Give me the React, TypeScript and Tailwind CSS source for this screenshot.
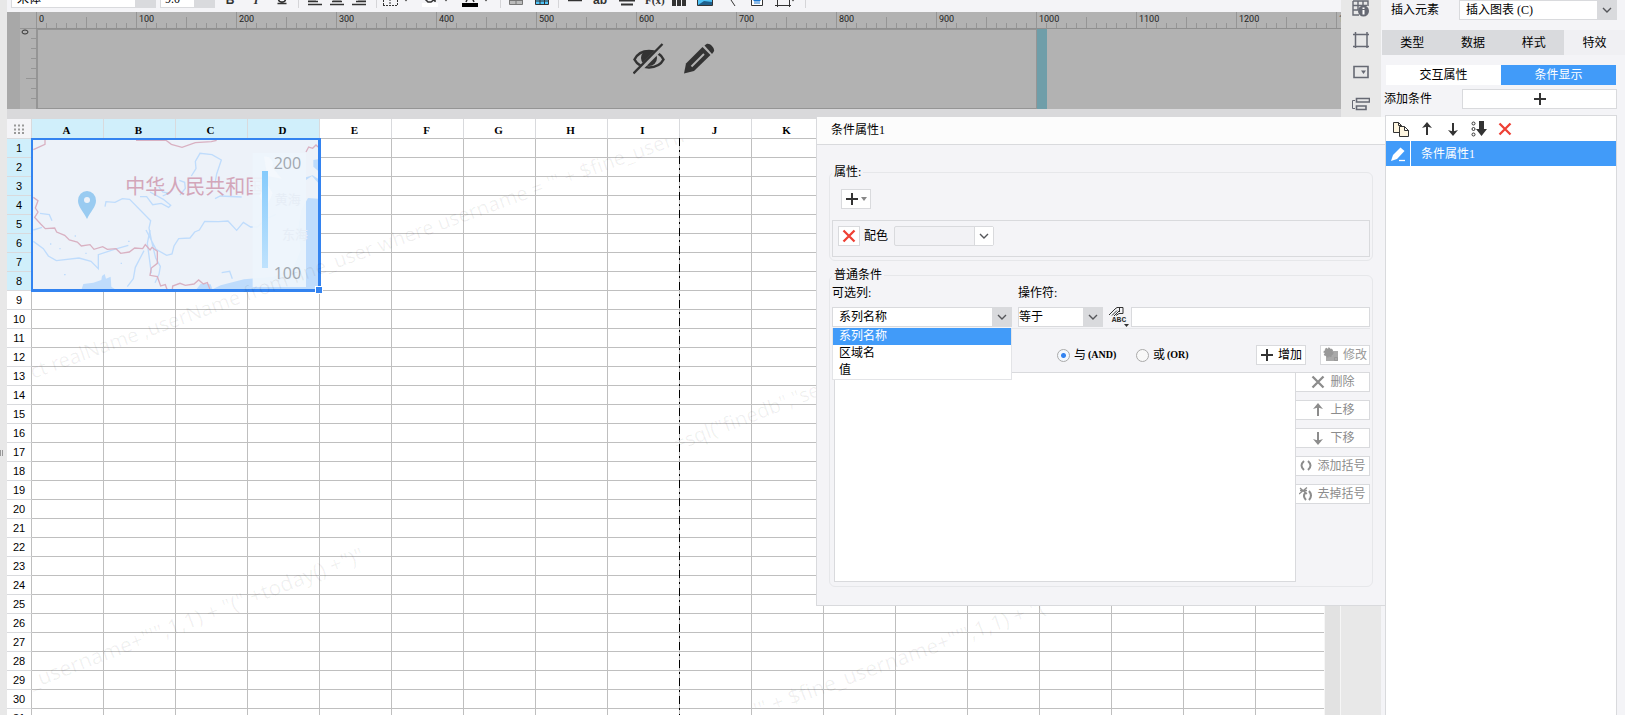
import React from 'react';

const COLUMNS = 'ABCDEFGHIJKLMNOPQR'.split('');
const ROWS = Array.from({ length: 32 }, (_, i) => i + 1);
const RULER = Array.from({ length: 14 }, (_, i) => i * 100);
const FONT = "font-['Liberation_Serif','Noto_Sans_CJK_SC',sans-serif]";

interface IconProps {
  children: React.ReactNode;
  className?: string;
  viewBox?: string;
}

// Base for the small line icons
const Icon: React.FC<IconProps> = ({ children, className = 'w-4 h-4', viewBox = '0 0 16 16' }) => (
  <svg viewBox={viewBox} className={`${className} shrink-0`} fill="none" stroke="currentColor" aria-hidden="true">
    {children}
  </svg>
);

const ChevronIcon = () => (
  <Icon className="w-[10px] h-[10px] text-[#55565a]" viewBox="0 0 10 10">
    <path d="M1 3l4 4 4-4" strokeWidth="1.4" />
  </Icon>
);

const CaretIcon = () => (
  <Icon className="w-1 h-4 text-[#444]" viewBox="0 0 4 16">
    <path d="M0 7h4L2 9.5z" fill="currentColor" stroke="none" />
  </Icon>
);

const PlusIcon = () => (
  <Icon className="w-[14px] h-[14px] text-[#333]" viewBox="0 0 14 14">
    <path d="M7 1v12M1 7h12" strokeWidth="2" />
  </Icon>
);

const CrossIcon = () => (
  <Icon className="w-4 h-4">
    <path d="M2.5 2.5l11 11M13.5 2.5l-11 11" strokeWidth="2.3" />
  </Icon>
);

const UpIcon = () => (
  <Icon>
    <path d="M8 14V5" strokeWidth="2" />
    <path d="M8 1l5 6-5-1.500L3 7z" fill="currentColor" stroke="none" />
  </Icon>
);

const DownIcon = () => (
  <Icon>
    <path d="M8 2v9" strokeWidth="2" />
    <path d="M8 15L3 9l5 1.500L13 9z" fill="currentColor" stroke="none" />
  </Icon>
);

interface SelectBoxProps {
  id: string;
  options: string[];
  className: string;
  textClass?: string;
}

const SelectBox: React.FC<SelectBoxProps> = ({ id, options, className, textClass = 'pl-[6px]' }) => (
  <div className={`relative flex h-5 bg-white border border-[#d9dadd] ${className}`}>
    <select id={id} className={`appearance-none w-full h-full pr-5 leading-4 outline-none ${textClass}`}>
      {options.map((o) => (
        <option key={o}>{o}</option>
      ))}
    </select>
    <span className="absolute inset-y-0 right-0 w-[19px] bg-[#d9dadd] flex items-center justify-center pointer-events-none">
      <ChevronIcon />
    </span>
  </div>
);

const Separator = ({ className }: { className: string }) => <span className={`w-px h-4 bg-[#d5d5d8] shrink-0 ${className}`} />;

const ToolButton = ({ label, children, className = 'w-4' }: { label: string; children: React.ReactNode; className?: string }) => (
  <button aria-label={label} className={`h-4 flex shrink-0 justify-between leading-4 text-[#333] ${className}`}>
    {children}
  </button>
);

const Toolbar = () => (
  <div className="h-3 shrink-0 bg-[#f4f4f7] flex items-end pb-1 pl-1 overflow-hidden">
    <div className="w-[145px] h-5 shrink-0 bg-white border border-[#d9dadd] flex items-end justify-between">
      <span className="pl-[5px] leading-4">宋体</span>
      <span className="w-5 h-full bg-[#d9dadd] flex justify-center items-center"><CaretIcon /></span>
    </div>
    <div className="w-[55px] h-5 ml-1 shrink-0 bg-white border border-[#d9dadd] flex items-end justify-between">
      <span className="pl-1 leading-4">9.0</span>
      <span className="w-5 h-full bg-[#d9dadd] flex justify-center items-center"><CaretIcon /></span>
    </div>
    <div className="flex gap-[10px] ml-[7px]">
      <ToolButton label="加粗"><b className="w-4 text-center font-['Liberation_Sans'] text-xs leading-4">B</b></ToolButton>
      <ToolButton label="斜体"><i className="w-4 text-center text-xs leading-4 font-bold">I</i></ToolButton>
      <ToolButton label="下划线">
        <Icon><path d="M4.500 1v6a3.500 3 0 0 0 7 0V1M3.500 11.500h9" strokeWidth="1.500" /></Icon>
      </ToolButton>
    </div>
    <Separator className="mx-2" />
    <div className="flex gap-[6px]">
      <ToolButton label="左对齐"><Icon><path d="M1 4.500h14M1 7.500h8M1 9.500h10M1 12.500h14" strokeWidth="1.500" /></Icon></ToolButton>
      <ToolButton label="居中"><Icon><path d="M1 4.500h14M4 7.500h8M3 9.500h10M1 12.500h14" strokeWidth="1.500" /></Icon></ToolButton>
      <ToolButton label="右对齐"><Icon><path d="M1 4.500h14M7 7.500h8M5 9.500h10M1 12.500h14" strokeWidth="1.500" /></Icon></ToolButton>
    </div>
    <Separator className="ml-[9px] mr-[5px]" />
    <div className="flex gap-[14px]">
      <ToolButton label="边框" className="w-[26px]">
        <Icon><path d="M1.500 13V1h14v12M8 1v12M1 7h14M1 13.500h15" strokeDasharray="2 1" /></Icon>
        <CaretIcon />
      </ToolButton>
      <ToolButton label="填充" className="w-[26px]">
        <Icon><path d="M3 7l5-5 5 5-4 3H6zM13 6v4" strokeWidth="1.500" /><path d="M0 11h16v4H0z" fill="#fff" stroke="none" /></Icon>
        <CaretIcon />
      </ToolButton>
      <ToolButton label="字体颜色" className="w-[26px]">
        <Icon><path d="M4 10l4-9 4 9M5 7h6" strokeWidth="1.500" /><path d="M0 11h16v4H0z" fill="#000" stroke="none" /></Icon>
        <CaretIcon />
      </ToolButton>
    </div>
    <Separator className="ml-3 mr-[7px]" />
    <div className="flex gap-[10px]">
      <ToolButton label="合并">
        <Icon><path d="M1.500 1.500h13v11h-13zM1 8.500h14M8 8v5" stroke="#777" fill="#bbb" /></Icon>
      </ToolButton>
      <ToolButton label="拆分">
        <Icon><path d="M1.500 1.500h13v11h-13zM1 5h14M1 9h14M6 1v11M10.500 1v11" fill="#4fc3f7" /></Icon>
      </ToolButton>
    </div>
    <Separator className="mx-2" />
    <div className="flex gap-[10px]">
      <ToolButton label="线"><Icon><path d="M1 8.500h14" strokeWidth="1.500" /></Icon></ToolButton>
      <ToolButton label="文本"><b className="font-['Liberation_Sans'] text-xs leading-4">ab</b></ToolButton>
      <ToolButton label="段落"><Icon><path d="M0 8.500h16M2 12.500h12" strokeWidth="2" /></Icon></ToolButton>
      <ToolButton label="公式"><b className="text-[11px] leading-4">F(x)</b></ToolButton>
      <ToolButton label="图表"><Icon><path d="M3 5v9M8 3v11M13 7v7" strokeWidth="4" /></Icon></ToolButton>
      <ToolButton label="图片"><Icon><path d="M.5 1.500h15v12H.5z" fill="#4fc3f7" /><path d="M1 13l6-4 8 1v3z" fill="#1f5f8b" stroke="none" /></Icon></ToolButton>
      <ToolButton label="斜线"><Icon><path d="M4 2l8 12" /></Icon></ToolButton>
      <ToolButton label="子报表"><Icon><path d="M2.500 1.500h11v12h-11z" fill="#fff" /><path d="M5 7h6v2H5zM5 11h6" fill="#1976d2" stroke="#1976d2" /></Icon></ToolButton>
      <ToolButton label="悬浮元素" className="w-5"><Icon><path d="M2.500 0v15M14.500 0v15M0 13.500h16" /></Icon><CaretIcon /></ToolButton>
    </div>
    <Separator className="ml-[10px]" />
  </div>
);

const RulerPanel = () => (
  <div className="h-[97px] shrink-0 bg-[#b2b2b2] flex overflow-hidden">
    <div className="w-[13px] shrink-0 bg-[#a8a8a8]" />
    <div className="w-4 shrink-0 pt-4">
      <svg viewBox="0 0 16 80" className="w-4 h-20" stroke="#959595" aria-hidden="true">
        <path d="M0 .5h16M11 10.500h5M11 20.500h5M11 30.500h5M11 40.500h5M6 50.500h10M11 60.500h5M11 70.500h5" />
        <ellipse cx="5" cy="4" rx="3" ry="2" fill="none" stroke="#333" />
      </svg>
    </div>
    <div className="flex-1 min-w-0">
      <div className="h-4 flex">
        {RULER.map((n) => (
          <div key={n} className="w-[100px] h-4 shrink-0 relative border-l border-[#959595]">
            <span className="block pl-[2px] pt-px leading-3 text-[9px] text-[#222] font-['Roboto']">{n}</span>
            <svg viewBox="0 0 99 16" className="absolute inset-0 w-full h-full" stroke="#959595" aria-hidden="true">
              <path d="M9.500 11v5M19.500 11v5M29.500 11v5M39.500 11v5M49.500 5v11M59.500 11v5M69.500 11v5M79.500 11v5M89.500 11v5" />
            </svg>
          </div>
        ))}
      </div>
      <div className="h-[81px] border-t border-[#8f8f8f] flex">
        <div className="w-[1001px] shrink-0 border-l-2 border-t border-b border-r border-[#959595] flex justify-center items-start gap-[18px] pt-[13px] pl-[273px] text-[#333]">
          <Icon className="w-8 h-8" viewBox="0 0 32 32">
            <path d="M1.500 16.500C7 5 25 5 30.500 16.500 25 27 7 27 1.500 16.500z" strokeWidth="2.500" />
            <circle cx="16" cy="15" r="8" fill="currentColor" stroke="none" />
            <path d="M2 31L32 1" stroke="#b2b2b2" strokeWidth="5" />
            <path d="M.5 30.500L29.500 1" strokeWidth="2.300" />
          </Icon>
          <Icon className="w-8 h-8" viewBox="0 0 32 32">
            <path d="M1 30.500l2-10L19.500 4l8 8L11 28z" fill="currentColor" stroke="none" />
            <path d="M8.500 23.500L21 11" stroke="#b2b2b2" strokeWidth="2" />
            <path d="M21.500 2.500l2-1.500c3-2 9.500 4.500 7 8l-1.500 2z" fill="currentColor" stroke="none" />
          </Icon>
        </div>
        <div className="w-[10px] shrink-0 bg-[#6f9ea9]" />
      </div>
    </div>
  </div>
);

const MapChart = () => (
  <svg viewBox="99 420 855 447" className="w-full h-full bg-[#edf2f9]" fill="none" aria-hidden="true">
    <g fill="#bfdcfc">
      <path d="M954 596l-30-2-20 36-10 60 8 60-20 50-60 30-90 8-70 18-25 12h320z" />
      <path d="M245 867l5-15 30-4 24-8 2-12 8-6 4 14 14-6 2 30 10 7zM590 867l12-16 30 2 5 14zM940 480l14-2v34l-14-12zM918 540l18-12 18 20v-12l-16-10-20 6z" />
      <path d="M178 744h4v4h-4zM224 706h4v4h-4zM150 730h4v4h-4zM192 822h5v4h-5zM256 758h4v4h-4zM384 722h5v4h-5zM362 788h4v4h-4z" />
    </g>
    <g stroke="#bfdcfc" strokeWidth="4">
      <path d="M315 620l3-15 27 2 22-11 22 2 63 64-5 22 8 40 12 50 14 25-4 24-12 25M438 690l30 58 32 18 16-4 6-24 14-22 34-2 14-18 14-6 16-26 42 1 28-2 26 28 20-24 22 14h20l26-24 30-14" />
      <path d="M574 528l14-22-2-22 14-24 36 4 28 16-14 42-5 28M540 585l16-20-2-18-16-6M476 560l12 16 18 4-18 8M420 590h20l18 24 26-4 22 12 6-6-22-18-40-22M645 596l16-8 64 3M665 818l24-4 8 22" />
      <path d="M100 724l30 22 15 22 24 14 68-8 36 10 22 22v-42l48-16 42-12M432 752l-26 50-6 34-18 24M450 690l-8 40 12 90M120 640l28 4 8 18M100 690l26-8" />
    </g>
    <g stroke="#d9b1c2" strokeWidth="4">
      <path d="M100 449l35-16v-13M408 421h90l16 12 32 9 40-14 48-3 16-4M918 456l8-15 12 4 10-10 6 6" />
      <path d="M100 592l14 10-8 22 8 12-10 16 18 20 14 14 28-2 6 12 24 10 14 14 24 6 12 12 26-4 12 14 26-8 14 8 26-2 14 14 26-4 16-12 24 2 8-12 14 16 6-8 16 12v36l-18 14-4 22 22 4 10 28 14-4 10 28 10-2 2-22 22-8 16 6 26-4 14-12 14 12 12-4 8 20 16 8" />
    </g>
    <text x="376" y="582" fontSize="60" fill="#d3a6b9" fontFamily="Noto Sans CJK SC">中华人民共和国</text>
    <path d="M234 602a27 29 0 0 1 54 0c0 18-16 32-27 55-11-23-27-37-27-55z" fill="#99cbf1" />
    <circle cx="261" cy="600" r="9" fill="#edf2f9" />
    <rect x="758" y="459" width="160" height="402" fill="#eef5fc" fillOpacity=".93" />
    <path d="M792 470a22 22 0 0 1 24 32l30 34-44-8zM800 550l18 30-20 44-20-36z" fill="#f4f8fd" />
    <text x="824" y="612" fontSize="39" fill="#e6edf6" fontFamily="Noto Sans CJK SC">黄海</text>
    <text x="846" y="717" fontSize="39" fill="#e6edf6" fontFamily="Noto Sans CJK SC">东海</text>
    <defs>
      <linearGradient id="scale" x1="0" y1="0" x2="0" y2="1">
        <stop offset="0" stopColor="#86cbfc" />
        <stop offset="1" stopColor="#bfe2fd" />
      </linearGradient>
    </defs>
    <rect x="786" y="513" width="18" height="291" fill="url(#scale)" />
    <g fill="#a0a7af" fontFamily="Open Sans" fontSize="48">
      <text x="821" y="508">200</text>
      <text x="821" y="838">100</text>
    </g>
  </svg>
);

const Watermark = () => (
  <svg className="absolute left-[25px] top-5 w-[1300px] h-[600px] pointer-events-none" fill="#000" fillOpacity=".06" fontFamily="Noto Sans" fontSize="20" aria-hidden="true">
    <text transform="translate(1 240) rotate(-20)">ct realName ,userName from fine_user where username = '" + $fine_usern</text>
    <text transform="translate(0 550) rotate(-21)" fontSize="21">_username+"'",1,1) + "(" +today() +")"</text>
    <text transform="translate(645 312) rotate(-21)">=sql("finedb","se</text>
    <text transform="translate(725 579) rotate(-20)" fontSize="21">'" + $fine_username+"'",1,1) + "(" +to</text>
  </svg>
);

const Sheet = () => (
  <div className="flex-1 min-h-0 flex">
    <div className="relative flex-1 min-w-0 overflow-hidden bg-white">
      <table className="table-fixed w-max border-separate border-spacing-0 text-black">
        <thead>
          <tr className="h-5">
            <th className="w-[25px] h-5 p-0 bg-[#f4f4f7] border-r border-b border-[#d9dadd]">
              <Icon className="w-[11px] h-[10px] mx-auto text-[#999]" viewBox="0 0 11 10">
                <path d="M0 1.500h11M0 5.500h11M0 9h11" strokeWidth="2" strokeDasharray="2 2" />
              </Icon>
            </th>
            {COLUMNS.map((c, i) => (
              <th
                key={c}
                className={`w-[72px] h-5 p-0 pt-[2px] pr-[2px] leading-4 text-[11px] font-bold border-r border-b border-r-[#d9dadd] border-b-[#bfbfbf] ${i < 4 ? 'bg-[#d0effb]' : 'bg-white'}`}
              >
                {c}
              </th>
            ))}
          </tr>
        </thead>
        <tbody>
          {ROWS.map((r) => (
            <tr key={r}>
              <th className={`w-[25px] h-[19px] p-0 leading-4 text-[11px] font-['Liberation_Sans'] font-normal border-r border-b border-r-[#bfbfbf] border-b-[#d9dadd] ${r < 9 ? 'bg-[#d0effb]' : 'bg-white'}`}>
                {r}
              </th>
              {COLUMNS.map((c) => (
                <td key={c} className="w-[72px] h-[19px] p-0 border-r border-b border-[#bfbfbf]" />
              ))}
            </tr>
          ))}
        </tbody>
      </table>
      {/* Page break */}
      <svg viewBox="0 0 1 600" className="absolute left-[672px] top-[19px] w-px h-[600px]" stroke="#000" strokeWidth="2" aria-hidden="true">
        <path d="M.5 0v600" strokeDasharray="8 4 2 4" />
      </svg>
      {/* Floating chart over A1:D8 */}
      <div className="absolute left-6 top-[19px] w-[290px] h-[154px] border-2 border-r-[3px] border-b-[3px] border-[#3383f0]">
        <MapChart />
        <span className="absolute -right-1 -bottom-1 w-[6px] h-[6px] bg-[#3383f0] outline outline-white" />
      </div>
      <Watermark />
    </div>
    <div className="w-[17px] shrink-0 bg-[#e2e2e2] border-x border-[#f6f6f6]" />
  </div>
);

const SideIcons = () => (
  <nav className="w-10 shrink-0 bg-[#e8e8e8] flex flex-col items-center gap-[14px] text-[#666973]">
    <button aria-label="单元格属性">
      <Icon className="w-[18px] h-[18px]" viewBox="0 0 18 18">
        <path d="M1 1h15v5M1 1v14h6M1 5.500h14M1 10h5M6 1v9M11 1v5" strokeWidth="1.400" />
        <circle cx="11.500" cy="11" r="5.500" fill="currentColor" stroke="none" />
        <path d="M11.500 10v4.500M11.500 7.500v1.500" stroke="#fff" strokeWidth="2" />
      </Icon>
    </button>
    <button aria-label="单元格元素">
      <Icon className="w-[18px] h-[18px]" viewBox="0 0 18 18">
        <path d="M1 2.500h16M1 14.500h16M3.500 0v16M15 0v16" strokeWidth="1.500" />
      </Icon>
    </button>
    <button aria-label="控件设置">
      <Icon className="w-[18px] h-[18px]" viewBox="0 0 18 18">
        <path d="M2 2.500h14v11H2z" strokeWidth="1.600" />
        <path d="M9 6.500h5L11.500 10z" fill="currentColor" stroke="none" />
      </Icon>
    </button>
    <button aria-label="条件属性">
      <Icon className="w-[18px] h-[18px]" viewBox="0 0 18 18">
        <path d="M3 4.500H.5v8H3" />
        <path d="M4.500 2.500h13v3.500h-13zM4.500 10h9.500v3.500H4.500z" strokeWidth="1.600" />
      </Icon>
    </button>
  </nav>
);

const TABS = ['类型', '数据', '样式', '特效'];

const PropertyPane = () => (
  <aside className="w-[244px] shrink-0 bg-[#f4f4f7] flex flex-col">
    <div className="flex items-center pl-[10px] pr-2 h-5">
      <label htmlFor="element" className="w-[68px] leading-4">插入元素</label>
      <SelectBox id="element" options={['插入图表 (C)']} className="flex-1" />
    </div>
    <div className="mt-[10px] ml-px h-[25px] grid grid-cols-4">
      {TABS.map((t) => (
        <button key={t} className={t === '特效' ? 'bg-[#f0f0f3]' : 'bg-[#d9dadd]'}>{t}</button>
      ))}
    </div>
    <div className="mt-[10px] ml-[5px] mr-[9px] h-5 grid grid-cols-2">
      <button className="bg-white">交互属性</button>
      <button className="bg-[#419bf9] text-white">条件显示</button>
    </div>
    <div className="mt-1 pl-[3px] pr-2 flex items-center">
      <span className="w-[78px]">添加条件</span>
      <button aria-label="添加条件" className="flex-1 h-5 bg-white border border-[#d9dadd] flex items-center justify-center">
        <PlusIcon />
      </button>
    </div>
    <div className="mt-[6px] ml-1 mr-2 flex-1 bg-white border border-b-0 border-[#d9dadd]">
      <div className="h-[25px] pl-[7px] flex items-center gap-[10px] text-[#333]">
        <button aria-label="复制">
          <Icon>
            <path d="M.5 1.500h5l3 3v7h-8zM5.500 1.500v3h3" fill="#fff6e0" />
            <path d="M6.500 5.500h5l4 4v6h-9zM11.500 5.500v4h4" fill="#fff6e0" />
          </Icon>
        </button>
        <button aria-label="上移"><UpIcon /></button>
        <button aria-label="下移"><DownIcon /></button>
        <button aria-label="移至底部">
          <Icon>
            <circle cx="2.500" cy="2.500" r="1.500" />
            <circle cx="2.500" cy="8" r="1.500" />
            <circle cx="2.500" cy="13.500" r="1.500" />
            <path d="M8 0h5v8h3l-5.500 7L5 8h3z" fill="currentColor" stroke="none" />
          </Icon>
        </button>
        <button aria-label="删除" className="text-[#ee4035]"><CrossIcon /></button>
      </div>
      <div className="h-[25px] bg-[#419bf9] text-white flex items-center">
        <button aria-label="编辑" className="w-[25px] h-full border-r border-white flex items-center justify-center">
          <Icon>
            <path d="M1 15l2-6 7.500-7.500 4 3.500L7 13z" fill="currentColor" stroke="none" />
            <path d="M9 14.500h6" strokeWidth="1.300" />
          </Icon>
        </button>
        <span className="pl-[10px]">条件属性1</span>
      </div>
    </div>
  </aside>
);

const SIDE_BUTTONS = [
  { label: '删除', icon: <CrossIcon /> },
  { label: '上移', icon: <UpIcon /> },
  { label: '下移', icon: <DownIcon /> },
  {
    label: '添加括号',
    icon: <Icon className="w-[14px] h-4" viewBox="0 0 14 16"><path d="M5 3Q0 7.500 5 12M9 3q5 4.500 0 9" strokeWidth="2" /></Icon>,
  },
  {
    label: '去掉括号',
    icon: (
      <Icon className="w-[14px] h-4" viewBox="0 0 14 16">
        <path d="M7 6q-4 4 0 8M10 5q4 4.500 0 9" strokeWidth="2" />
        <path d="M1 2l7 6M8 1.500L0 8M1 4.500h7" strokeWidth="1.300" />
      </Icon>
    ),
  },
];

const RadioOption = ({ text, op, checked }: { text: string; op: string; checked?: boolean }) => (
  <label className="w-[79px] flex items-center">
    <input
      type="radio"
      name="logic"
      defaultChecked={checked}
      className="appearance-none w-[13px] h-[13px] mr-1 rounded-full border border-[#aaa] bg-[#f8f8f8] checked:bg-[radial-gradient(circle,#3383f0_0_2px,#f4f8fd_3px)]"
    />
    <span>{text}</span>
    <span className="pl-[2px] text-[10px] font-bold">{op}</span>
  </label>
);

const ConditionDialog = () => (
  <section className="absolute right-[240px] top-[117px] w-[569px] bg-[#f4f4f7] border-l border-b border-[#d9dadd]">
    <h2 className="h-7 pl-[14px] leading-[26px] bg-[#fcfcfc] border-b border-[#d9dadd]">条件属性1</h2>
    <div className="px-3 pt-[19px] pb-[18px]">
      <fieldset className="min-w-0 px-[2px] pb-[3px] border border-[#e6e7ea] rounded-md">
        <legend className="px-[2px] leading-4">属性:</legend>
        <button aria-label="添加属性" className="block mt-[9px] ml-[9px] w-[30px] h-5 bg-white border border-[#d9dadd]">
          <span className="flex items-center justify-center gap-[2px]">
            <PlusIcon />
            <Icon className="w-[6px] h-1 text-[#888]" viewBox="0 0 6 4"><path d="M0 0h6L3 4z" fill="currentColor" stroke="none" /></Icon>
          </span>
        </button>
        <div className="mt-[11px] h-[37px] pt-[5px] pl-[5px] border border-[#d9dadd] flex items-start">
          <button aria-label="删除属性" className="w-[22px] h-5 bg-white border border-[#d9dadd] flex items-center justify-center text-[#ee4035]">
            <CrossIcon />
          </button>
          <span className="ml-1 leading-5">配色</span>
          <button aria-label="配色" className="ml-[6px] w-[100px] h-5 border border-[#d9dadd] rounded-[2px] bg-[#f2f2f5] flex justify-end">
            <span className="w-[19px] h-full bg-white border-l border-[#d9dadd] flex items-center justify-center"><ChevronIcon /></span>
          </button>
        </div>
      </fieldset>

      <fieldset className="mt-[6px] min-w-0 px-[2px] pb-1 border border-[#e6e7ea] rounded-md">
        <legend className="px-[2px] leading-4">普通条件</legend>
        <div className="pt-[2px] pb-px flex items-end border-b border-[#e6e7ea]">
          <div className="relative flex flex-col gap-[6px] mr-[6px]">
            <label htmlFor="column" className="leading-4">可选列:</label>
            <SelectBox id="column" options={['系列名称', '区域名', '值']} className="w-[180px]" />
            <ul className="absolute z-10 top-[43px] left-0 w-[180px] bg-white border-x border-b border-[#e3e4e7] leading-[17px]">
              <li className="pl-[6px] h-[17px] bg-[#419bf9] text-white">系列名称</li>
              <li className="pl-[6px] h-[17px]">区域名</li>
              <li className="pl-[6px] h-[17px]">值</li>
            </ul>
          </div>
          <div className="flex flex-col gap-[6px] mr-[6px]">
            <label htmlFor="operator" className="leading-4">操作符:</label>
            <SelectBox id="operator" options={['等于']} className="w-[85px]" textClass="pl-0" />
          </div>
          <button aria-label="值类型" className="relative w-5 h-5 mr-[2px] text-[#333] flex flex-col">
            <Icon className="w-[15px] h-[9px]" viewBox="0 0 15 9">
              <path d="M0 8l6-6 2-1.500h6v6h-4L7 8.500M3 8.500l5-5M5 9l5-5M10.500 1v4" />
            </Icon>
            <span className="font-['Liberation_Mono'] text-[8px] leading-[8px] font-bold">ABC</span>
            <Icon className="absolute right-0 bottom-0 w-[5px] h-[3px]" viewBox="0 0 5 3"><path d="M0 0h5L2.500 3z" fill="currentColor" stroke="none" /></Icon>
          </button>
          <input aria-label="值" className="flex-1 min-w-0 h-5 px-1 bg-white border border-[#d9dadd] outline-none" />
        </div>
        <div className="mt-4 h-5 pl-[225px] flex">
          <RadioOption text="与" op="(AND)" checked />
          <RadioOption text="或" op="(OR)" />
          <button className="ml-auto w-[50px] h-5 bg-white border border-[#d9dadd] flex items-center justify-center gap-1">
            <PlusIcon />
            <span className="whitespace-nowrap">增加</span>
          </button>
          <button disabled className="ml-[14px] w-[50px] h-5 bg-white border border-[#d9dadd] text-[#999] flex items-center justify-center gap-1">
            <Icon>
              <path d="M6 4h9v10H3V9z" fill="#aaa" stroke="none" />
              <circle cx="5.500" cy="5.500" r="4" fill="currentColor" strokeDasharray="2 1" strokeWidth="2" />
              <path d="M11.500 10.500h3v3h-3z" />
            </Icon>
            <span className="whitespace-nowrap">修改</span>
          </button>
        </div>
        <div className="mt-[7px] pl-[2px] flex">
          <div role="listbox" aria-label="条件列表" className="flex-1 h-[210px] bg-white border border-[#d9dadd]" />
          <div className="w-[74px] flex flex-col gap-2">
            {SIDE_BUTTONS.map((b) => (
              <button key={b.label} disabled className="h-5 bg-white border border-l-0 border-[#d9dadd] text-[#8c8c8c] flex items-center justify-center gap-1">
                {b.icon}
                <span className="whitespace-nowrap">{b.label}</span>
              </button>
            ))}
          </div>
        </div>
      </fieldset>
    </div>
  </section>
);

export default function App() {
  return (
    <div className={`relative h-screen flex overflow-hidden bg-[#d9d9db] text-xs text-black ${FONT}`}>
      <div className="w-[7px] shrink-0 bg-[#e8e8e8] flex items-center">
        <span className="mt-[190px] w-[3px] h-[6px] border-x border-[#999]" />
      </div>
      <main className="flex-1 min-w-0 flex flex-col">
        <Toolbar />
        <RulerPanel />
        <div className="h-[10px] shrink-0 bg-[#d9d9db]" />
        <Sheet />
      </main>
      <SideIcons />
      <PropertyPane />
      <ConditionDialog />
    </div>
  );
}
